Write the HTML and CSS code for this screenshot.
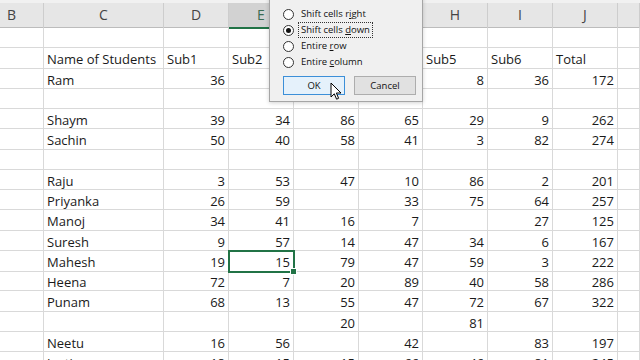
FILE: index.html
```html
<!DOCTYPE html>
<html>
<head>
<meta charset="utf-8">
<link rel="stylesheet" href="styles.css">
</head>
<body>
<div class="sheet">
  <div class="row hdr">
    <div class="ch chb">B</div><div class="ch">C</div><div class="ch">D</div><div class="ch sel">E</div><div class="ch"></div><div class="ch"></div><div class="ch">H</div><div class="ch">I</div><div class="ch">J</div><div class="ch"></div>
  </div>
  <div class="row"><div class="c"></div><div class="c"></div><div class="c"></div><div class="c"></div><div class="c"></div><div class="c"></div><div class="c"></div><div class="c"></div><div class="c"></div><div class="c"></div></div>
  <div class="row"><div class="c"></div><div class="c">Name of Students</div><div class="c">Sub1</div><div class="c">Sub2</div><div class="c"></div><div class="c"></div><div class="c">Sub5</div><div class="c">Sub6</div><div class="c">Total</div><div class="c"></div></div>
  <div class="row"><div class="c"></div><div class="c">Ram</div><div class="c n">36</div><div class="c n"></div><div class="c n"></div><div class="c n"></div><div class="c n">8</div><div class="c n">36</div><div class="c n">172</div><div class="c"></div></div>
  <div class="row"><div class="c"></div><div class="c"></div><div class="c"></div><div class="c"></div><div class="c"></div><div class="c"></div><div class="c"></div><div class="c"></div><div class="c"></div><div class="c"></div></div>
  <div class="row"><div class="c"></div><div class="c">Shaym</div><div class="c n">39</div><div class="c n">34</div><div class="c n">86</div><div class="c n">65</div><div class="c n">29</div><div class="c n">9</div><div class="c n">262</div><div class="c"></div></div>
  <div class="row"><div class="c"></div><div class="c">Sachin</div><div class="c n">50</div><div class="c n">40</div><div class="c n">58</div><div class="c n">41</div><div class="c n">3</div><div class="c n">82</div><div class="c n">274</div><div class="c"></div></div>
  <div class="row"><div class="c"></div><div class="c"></div><div class="c"></div><div class="c"></div><div class="c"></div><div class="c"></div><div class="c"></div><div class="c"></div><div class="c"></div><div class="c"></div></div>
  <div class="row"><div class="c"></div><div class="c">Raju</div><div class="c n">3</div><div class="c n">53</div><div class="c n">47</div><div class="c n">10</div><div class="c n">86</div><div class="c n">2</div><div class="c n">201</div><div class="c"></div></div>
  <div class="row"><div class="c"></div><div class="c">Priyanka</div><div class="c n">26</div><div class="c n">59</div><div class="c n"></div><div class="c n">33</div><div class="c n">75</div><div class="c n">64</div><div class="c n">257</div><div class="c"></div></div>
  <div class="row"><div class="c"></div><div class="c">Manoj</div><div class="c n">34</div><div class="c n">41</div><div class="c n">16</div><div class="c n">7</div><div class="c n"></div><div class="c n">27</div><div class="c n">125</div><div class="c"></div></div>
  <div class="row"><div class="c"></div><div class="c">Suresh</div><div class="c n">9</div><div class="c n">57</div><div class="c n">14</div><div class="c n">47</div><div class="c n">34</div><div class="c n">6</div><div class="c n">167</div><div class="c"></div></div>
  <div class="row"><div class="c"></div><div class="c">Mahesh</div><div class="c n">19</div><div class="c n active">15</div><div class="c n">79</div><div class="c n">47</div><div class="c n">59</div><div class="c n">3</div><div class="c n">222</div><div class="c"></div></div>
  <div class="row"><div class="c"></div><div class="c">Heena</div><div class="c n">72</div><div class="c n">7</div><div class="c n">20</div><div class="c n">89</div><div class="c n">40</div><div class="c n">58</div><div class="c n">286</div><div class="c"></div></div>
  <div class="row"><div class="c"></div><div class="c">Punam</div><div class="c n">68</div><div class="c n">13</div><div class="c n">55</div><div class="c n">47</div><div class="c n">72</div><div class="c n">67</div><div class="c n">322</div><div class="c"></div></div>
  <div class="row"><div class="c"></div><div class="c"></div><div class="c n"></div><div class="c n"></div><div class="c n">20</div><div class="c n"></div><div class="c n">81</div><div class="c n"></div><div class="c n"></div><div class="c"></div></div>
  <div class="row"><div class="c"></div><div class="c">Neetu</div><div class="c n">16</div><div class="c n">56</div><div class="c n"></div><div class="c n">42</div><div class="c n"></div><div class="c n">83</div><div class="c n">197</div><div class="c"></div></div>
  <div class="row"><div class="c"></div><div class="c">Jyoti</div><div class="c n">18</div><div class="c n">15</div><div class="c n">15</div><div class="c n">66</div><div class="c n">46</div><div class="c n">81</div><div class="c n">245</div><div class="c"></div></div>

  <div class="dialog">
    <div class="opts">
      <div class="opt"><span class="radio"></span><span class="lbl">Shift cells r<u>i</u>ght</span></div>
      <div class="opt"><span class="radio on"></span><span class="lbl focus">Shift cells <u>d</u>own</span></div>
      <div class="opt"><span class="radio"></span><span class="lbl">Entire <u>r</u>ow</span></div>
      <div class="opt"><span class="radio"></span><span class="lbl">Entire <u>c</u>olumn</span></div>
    </div>
    <div class="btns">
      <div class="btn ok">OK</div>
      <div class="btn">Cancel</div>
    </div>
  </div>
  <svg class="cursor" width="12" height="19" viewBox="0 0 12 19"><path d="M1 1 L1 15 L4.3 11.8 L6.6 17.2 L8.6 16.3 L6.4 11 L11 11 Z" fill="#fff" stroke="#000" stroke-width="1" stroke-linejoin="round"/></svg>
</div>
</body>
</html>
```

FILE: styles.css
```css
html, body {
  margin: 0;
  padding: 0;
  background: #fff;
  overflow: hidden;
}
.sheet {
  position: relative;
  width: 640px;
  height: 360px;
  overflow: hidden;
  font-family: "Open Sans", "Liberation Sans", sans-serif;
  color: #1a1a1a;
}
.row {
  display: grid;
  grid-template-columns: 44px 120px 65px 65px 65px 64px 65px 65px 65px 1fr;
  height: 20.25px;
}
.row.hdr {
  height: 28px;
  background: #e6e6e6;
  border-top: 3px solid #f1f1f1;
  box-sizing: border-box;
  border-bottom: 1px solid #bcbcbc;
}
.ch {
  font-size: 14px;
  color: #444;
  text-align: center;
  line-height: 24px;
  border-right: 1px solid #cdcdcd;
}
.chb {
  text-align: left;
  padding-left: 7px;
}
.ch.sel {
  background: #d2d2d2;
  color: #3b6b52;
  border-bottom: 2px solid #217346;
}
.c {
  box-sizing: border-box;
  border-right: 1px solid #d9d9d9;
  border-bottom: 1px solid #d9d9d9;
  font-size: 13px;
  line-height: 18px;
  padding: 2px 3px 0 3px;
  white-space: nowrap;
  overflow: hidden;
}
.n {
  text-align: right;
}
.active {
  position: relative;
  outline: 2px solid #217346;
  outline-offset: -1px;
  overflow: visible;
  z-index: 1;
}
.active::after {
  content: "";
  position: absolute;
  right: -4px;
  bottom: -4px;
  width: 5px;
  height: 5px;
  background: #217346;
  border: 1px solid #fff;
}
.dialog {
  position: absolute;
  left: 269px;
  top: -20px;
  width: 154px;
  height: 122px;
  box-sizing: border-box;
  background: #f0f0f0;
  border: 1px solid #a5a5a5;
  box-shadow: 0 1px 4px rgba(0,0,0,0.18);
  padding: 25px 0 0 13px;
  font-family: "Open Sans", "Liberation Sans", sans-serif;
  font-size: 9.5px;
  color: #111;
  z-index: 5;
}
.opts {
  display: flex;
  flex-direction: column;
}
.opt {
  display: flex;
  align-items: center;
  height: 16px;
}
.radio {
  box-sizing: border-box;
  width: 11px;
  height: 11px;
  border: 1px solid #333;
  border-radius: 50%;
  background: #fff;
  margin-right: 6px;
  display: flex;
  align-items: center;
  justify-content: center;
}
.radio.on::after {
  content: "";
  width: 5px;
  height: 5px;
  border-radius: 50%;
  background: #111;
}
.lbl {
  line-height: 12px;
  padding: 1px 2px;
  border: 1px dotted transparent;
  margin-left: -2px;
}
.lbl.focus {
  border-color: #333;
}
.btns {
  display: flex;
  gap: 9px;
  margin-top: 6px;
}
.btn {
  box-sizing: border-box;
  width: 62px;
  height: 19px;
  line-height: 17px;
  text-align: center;
  background: #e1e1e1;
  border: 1px solid #adadad;
}
.btn.ok {
  background: #e5f1fb;
  border-color: #3c8fd8;
}
.cursor {
  position: absolute;
  left: 330px;
  top: 82px;
  z-index: 6;
}
```
